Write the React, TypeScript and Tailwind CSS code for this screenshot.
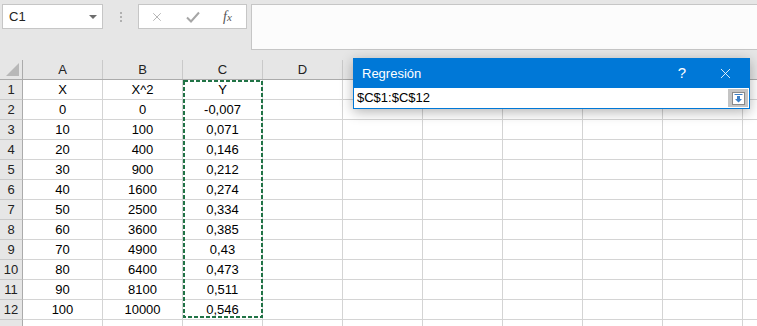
import { X } from "lucide-react";

const COLS = ["A", "B", "C", "D", "E", "F", "G", "H", "I", ""];

const DATA: string[][] = [
  ["X", "X^2", "Y"],
  ["0", "0", "-0,007"],
  ["10", "100", "0,071"],
  ["20", "400", "0,146"],
  ["30", "900", "0,212"],
  ["40", "1600", "0,274"],
  ["50", "2500", "0,334"],
  ["60", "3600", "0,385"],
  ["70", "4900", "0,43"],
  ["80", "6400", "0,473"],
  ["90", "8100", "0,511"],
  ["100", "10000", "0,546"],
  ["", "", ""],
];

function Toolbar() {
  return (
    <div className="h-[60px] bg-[#e6e6e6] flex items-start pt-[4px] pl-[2px] gap-[4px]">
      <div className="w-[101px] h-[25px] bg-white border border-[#c6c6c6] flex items-center justify-between pl-[6px] pr-[5px]">
        <span className="text-[13px] text-[#222]">C1</span>
        <svg width="8" height="4" viewBox="0 0 8 4">
          <path d="M0 0 L8 0 L4 4 Z" fill="#6d6d6d" />
        </svg>
      </div>
      <div className="w-[27px] h-[25px] flex flex-col items-center justify-center gap-[2px]">
        <span className="w-[2px] h-[2px] bg-[#b0b0b0]" />
        <span className="w-[2px] h-[2px] bg-[#b0b0b0]" />
        <span className="w-[2px] h-[2px] bg-[#b0b0b0]" />
      </div>
      <div className="w-[109px] h-[25px] bg-white border border-[#c6c6c6] flex items-center pl-[11px] gap-[22px]">
        <X size={14} strokeWidth={1.4} color="#a6a6a6" />
        <svg width="14" height="12" viewBox="0 0 14 12">
          <path d="M1 6.5 L5 10.5 L13 1.5" fill="none" stroke="#a6a6a6" strokeWidth="2" />
        </svg>
        <span className="text-[14px] italic text-[#555] font-['Liberation_Serif',serif] ml-[1px]">
          f<span className="text-[11px]">x</span>
        </span>
      </div>
      <div className="flex-1 h-[46px] bg-[#fcfcfc] border border-[#c6c6c6] border-r-0" />
    </div>
  );
}

function Grid() {
  return (
    <div className="relative">
      <div className="flex h-[20px] bg-[#e6e6e6] border-b border-[#ababab]">
        <div className="w-[23px] shrink-0 border-r border-[#ababab] relative">
          <svg className="absolute right-[3px] bottom-[3px]" width="13" height="13" viewBox="0 0 13 13">
            <path d="M13 0 L13 13 L0 13 Z" fill="#b8b8b8" />
          </svg>
        </div>
        {COLS.map((c, j) => (
          <div
            key={j}
            className="w-[80px] shrink-0 border-r border-[#c9c9c9] flex items-center justify-center text-[13px] text-[#222]"
          >
            {c}
          </div>
        ))}
      </div>
      {DATA.map((row, i) => (
        <div key={i} className="flex h-[20px] border-b border-[#d4d4d4]">
          <div className="w-[23px] shrink-0 bg-[#e6e6e6] border-r border-[#ababab] border-b border-b-[#c9c9c9] -mb-[1px] flex items-center justify-center text-[13px] text-[#222]">
            {i < 12 ? i + 1 : ""}
          </div>
          {COLS.map((c, j) => (
            <div
              key={j}
              className="w-[80px] shrink-0 border-r border-[#d4d4d4] flex items-center justify-center text-[13px] text-black"
            >
              {row[j] ?? ""}
            </div>
          ))}
        </div>
      ))}
      <svg className="absolute left-[182px] top-[19px]" width="83" height="241" viewBox="0 0 83 241">
        <rect x="2" y="2" width="78" height="236" fill="none" stroke="#217346" strokeWidth="2" strokeDasharray="4 2" />
      </svg>
    </div>
  );
}

function RangeDialog() {
  return (
    <div className="absolute left-[353px] top-[58px] w-[397px] bg-[#0078d7] border border-[#0078d7] shadow-[0_3px_12px_rgba(0,0,0,0.3)]">
      <div className="h-[29px] flex items-center pl-[8px] text-white text-[13px]">
        <span className="flex-1">Regresión</span>
        <span className="w-[12px] text-center mr-[29px] text-[15px]">?</span>
        <X size={17} strokeWidth={1.2} color="#ffffff" className="mr-[15px]" />
      </div>
      <div className="h-[20px] bg-white flex items-center">
        <span className="flex-1 pl-[3px] text-[13px] text-black">$C$1:$C$12</span>
        <div className="w-[20px] h-[18px] mr-[1px] bg-[#c4c4c4] flex items-center justify-center">
          <svg width="13" height="13" viewBox="0 0 13 13">
            <rect x="0.5" y="0.5" width="12" height="12" fill="#ffffff" stroke="#8a8a8a" />
            <line x1="2.5" y1="2.5" x2="10.5" y2="2.5" stroke="#3c7fc7" />
            <path d="M5 4 L8 4 L8 7 L10 7 L6.5 10.5 L3 7 L5 7 Z" fill="#3c7fc7" />
          </svg>
        </div>
      </div>
    </div>
  );
}

export default function App() {
  return (
    <div className="relative w-[757px] h-[326px] overflow-hidden bg-white font-['Liberation_Sans',sans-serif]">
      <Toolbar />
      <Grid />
      <RangeDialog />
    </div>
  );
}
